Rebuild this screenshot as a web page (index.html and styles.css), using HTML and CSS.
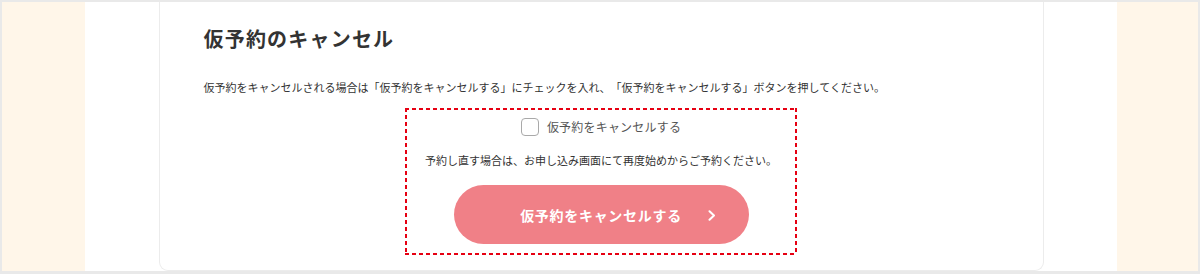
FILE: index.html
```html
<!DOCTYPE html>
<html lang="ja">
<head>
<meta charset="utf-8">
<title>仮予約のキャンセル</title>
<link rel="stylesheet" href="styles.css">
</head>
<body>
<div class="page">
  <div class="side"></div>
  <main class="main">
    <section class="card">
      <h2 class="title">仮予約のキャンセル</h2>
      <p class="lead">仮予約をキャンセルされる場合は「仮予約をキャンセルする」にチェックを入れ、「仮予約をキャンセルする」ボタンを押してください。</p>
      <div class="box">
        <label class="check-row">
          <span class="checkbox"></span>
          <span class="check-label">仮予約をキャンセルする</span>
        </label>
        <p class="note">予約し直す場合は、お申し込み画面にて再度始めからご予約ください。</p>
        <button class="btn" type="button">
          <span class="btn-text">仮予約をキャンセルする</span>
          <svg class="chev" width="8" height="11" viewBox="0 0 8 11"><polyline points="1.5,1.2 6,5.5 1.5,9.8" fill="none" stroke="#fff" stroke-width="2" stroke-linecap="round" stroke-linejoin="round"/></svg>
        </button>
      </div>
    </section>
  </main>
  <div class="side"></div>
</div>
</body>
</html>
```

FILE: styles.css
```css
* { box-sizing: border-box; }
html, body { margin: 0; }
body {
  background: #e9e9e9;
  padding: 2px 2px 3px 2px;
  height: 274px;
  overflow: hidden;
  font-family: "Noto Sans CJK JP", "Noto Sans", sans-serif;
  color: #333;
  text-spacing-trim: space-all;
}
.page {
  display: grid;
  grid-template-columns: 83px 1fr 81px;
  height: 269px;
}
.side { background: #fff6e9; }
.main {
  background: #fff;
  display: flex;
  justify-content: center;
  overflow: hidden;
}
.card {
  width: 885px;
  height: 269px;
  border: 1px solid #ececec;
  border-top: none;
  border-radius: 0 0 9px 9px;
  padding: 22px 44px 0;
}
.title {
  margin: 0;
  font-size: 20px;
  line-height: 30px;
  font-weight: 700;
  letter-spacing: 1.2px;
  color: #333;
}
.lead {
  margin: 24px 0 0;
  font-size: 11px;
  line-height: 18px;
  color: #333;
  white-space: nowrap;
}
.box {
  width: 392px;
  margin: 12px auto 0;
  padding: 10px 0 11px;
  display: flex;
  flex-direction: column;
  align-items: center;
  background:
    repeating-linear-gradient(90deg, #e60012 0 4px, transparent 4px 7px) left top / 100% 2px no-repeat,
    repeating-linear-gradient(90deg, #e60012 0 4px, transparent 4px 7px) left bottom / 100% 2px no-repeat,
    repeating-linear-gradient(180deg, #e60012 0 4px, transparent 4px 7px) left top / 2px 100% no-repeat,
    repeating-linear-gradient(180deg, #e60012 0 4px, transparent 4px 7px) right top / 2px 100% no-repeat;
}
.check-row {
  display: flex;
  align-items: center;
  gap: 8px;
  height: 18px;
}
.checkbox {
  width: 18px;
  height: 18px;
  border: 1px solid #a9a9a9;
  border-radius: 4px;
  background: #fff;
}
.check-label {
  font-size: 12px;
  line-height: 18px;
  color: #555;
  letter-spacing: 0.2px;
}
.note {
  margin: 15px 0 0;
  font-size: 11px;
  line-height: 18px;
  color: #333;
  white-space: nowrap;
}
.btn {
  position: relative;
  margin-top: 16px;
  width: 295px;
  height: 59px;
  border: none;
  border-radius: 30px;
  background: #f08087;
  color: #fff;
  font-family: inherit;
  font-size: 14px;
  font-weight: 700;
  letter-spacing: 0.7px;
  display: flex;
  align-items: center;
  justify-content: center;
  padding: 0;
}
.btn-text { line-height: 20px; }
.chev {
  position: absolute;
  right: 33px;
  top: 25px;
}
```
